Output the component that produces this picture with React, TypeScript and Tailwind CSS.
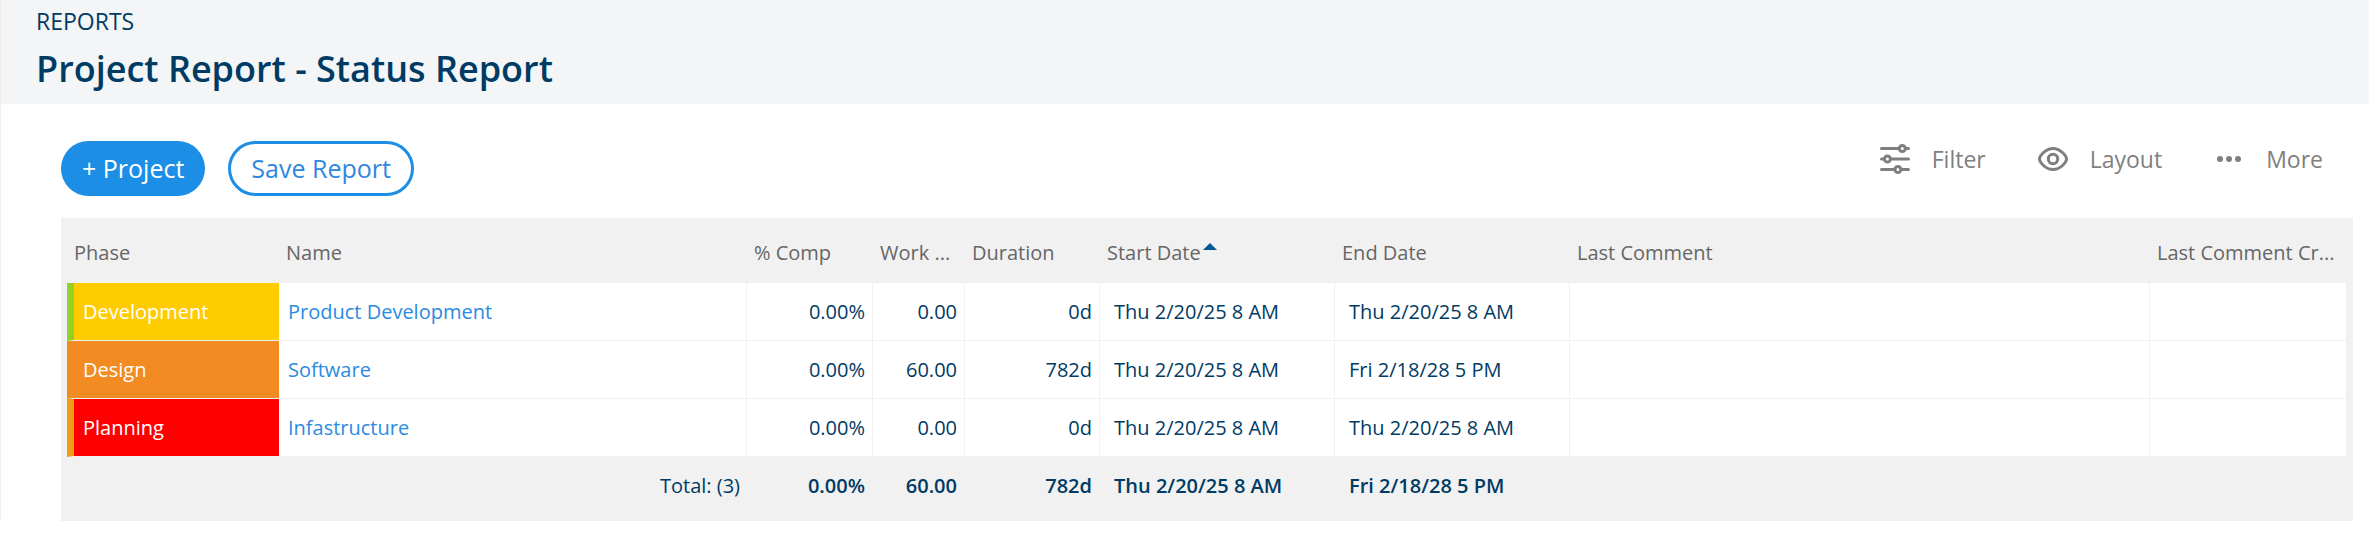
const COLUMNS = [
  { key: "phase", label: "Phase", width: "w-[212px]" },
  { key: "name", label: "Name", width: "w-[468px]" },
  { key: "comp", label: "% Comp", width: "w-[126px]" },
  { key: "work", label: "Work ...", width: "w-[92px]" },
  { key: "duration", label: "Duration", width: "w-[135px]" },
  { key: "start", label: "Start Date", width: "w-[235px]", sorted: true },
  { key: "end", label: "End Date", width: "w-[235px]" },
  { key: "comment", label: "Last Comment", width: "" },
  { key: "created", label: "Last Comment Cr...", width: "w-[196px]" },
];

const PROJECTS = [
  {
    phase: "Development",
    phaseColor: "bg-[#ffcc00] border-l-[#92d225]",
    name: "Product Development",
    comp: "0.00%",
    work: "0.00",
    duration: "0d",
    start: "Thu 2/20/25 8 AM",
    end: "Thu 2/20/25 8 AM",
  },
  {
    phase: "Design",
    phaseColor: "bg-[#f28b22] border-l-[#f28b22]",
    name: "Software",
    comp: "0.00%",
    work: "60.00",
    duration: "782d",
    start: "Thu 2/20/25 8 AM",
    end: "Fri 2/18/28 5 PM",
  },
  {
    phase: "Planning",
    phaseColor: "bg-[#ff0000] border-l-[#f39c12]",
    name: "Infastructure",
    comp: "0.00%",
    work: "0.00",
    duration: "0d",
    start: "Thu 2/20/25 8 AM",
    end: "Thu 2/20/25 8 AM",
  },
];

const CELL = "border-r border-b border-[#f1f1f1]";

function FilterIcon() {
  return (
    <svg width="30" height="30" viewBox="0 0 30 30" fill="none" stroke="currentColor" strokeWidth="3" strokeLinecap="round">
      <path d="M1.5 4.5H19M25.5 4.5H28.5M1.5 15H4M10.5 15H28.5M1.5 25.5H14.5M21 25.5H28.5" />
      <circle cx="22.3" cy="4.5" r="3" />
      <circle cx="7.4" cy="15" r="3" />
      <circle cx="17.9" cy="25.5" r="3" />
    </svg>
  );
}

function EyeIcon() {
  return (
    <svg width="30" height="30" viewBox="0 0 30 30" fill="none" stroke="currentColor" strokeWidth="3">
      <path d="M1.5 15C1.5 12.4 7 4.5 15 4.5S28.5 12.4 28.5 15 23 25.5 15 25.5 1.5 17.6 1.5 15Z" />
      <circle cx="15" cy="15" r="4.7" />
    </svg>
  );
}

function DotsIcon() {
  return (
    <svg width="30" height="30" viewBox="0 0 30 30" fill="currentColor">
      <circle cx="6" cy="15" r="3" />
      <circle cx="15" cy="15" r="3" />
      <circle cx="24" cy="15" r="3" />
    </svg>
  );
}

export default function App() {
  return (
    <main className="border-l border-[#eeeeee] bg-white font-['Open_Sans',sans-serif] text-[#003b63]">
      {/* Page header */}
      <header className="h-[104px] bg-[#f3f5f7] px-[35px] pt-1">
        <p className="text-[23px] leading-[34px]">REPORTS</p>
        <h1 className="text-4xl leading-[62px] font-semibold">Project Report - Status Report</h1>
      </header>

      <div className="pt-[37px] pr-4 pl-[60px]">
        {/* Toolbar */}
        <div className="flex items-start justify-between pb-[22px]">
          <div className="flex gap-[23px]">
            <button type="button" className="h-[55px] rounded-[28px] bg-[#1c8ee6] px-[21px] text-[25px] text-white">
              + Project
            </button>
            <button
              type="button"
              className="h-[55px] rounded-[28px] border-3 border-[#1c8ee6] px-5 text-[25px] text-[#2f87e0]"
            >
              Save Report
            </button>
          </div>
          <div className="flex gap-[52px] pr-[30px] text-[23px] leading-[36px] text-[#7f7f7f]">
            <button type="button" className="flex items-center gap-[22px]">
              <FilterIcon />
              Filter
            </button>
            <button type="button" className="flex items-center gap-[22px]">
              <EyeIcon />
              Layout
            </button>
            <button type="button" className="flex items-center gap-[22px]">
              <DotsIcon />
              More
            </button>
          </div>
        </div>

        {/* Report grid */}
        <div className="bg-[#f1f1f1] pr-[7px] pl-[6px]">
          <table className="w-full table-fixed border-separate border-spacing-0 text-[20px] leading-[28px] whitespace-nowrap">
            <thead>
              <tr className="h-[65px] text-left text-[#666666]">
                {COLUMNS.map((col) => (
                  <th key={col.key} scope="col" className={`pt-1 pl-[7px] font-normal ${col.width}`}>
                    {col.label}
                    {col.sorted && (
                      <svg className="ml-0.5 inline-block align-[10px]" width="14" height="7" viewBox="0 0 14 7">
                        <path d="M0 7L7 0L14 7Z" fill="#005792" />
                      </svg>
                    )}
                  </th>
                ))}
              </tr>
            </thead>
            <tbody>
              {PROJECTS.map((row) => (
                <tr key={row.name} className="h-[58px] bg-white">
                  <td className={`border-b border-l-[7px] border-b-[#f1f1f1] pl-[9px] text-white ${row.phaseColor}`}>
                    {row.phase}
                  </td>
                  <td className={`${CELL} pl-[9px]`}>
                    <a href="#" className="text-[#2a8be2]">
                      {row.name}
                    </a>
                  </td>
                  <td className={`${CELL} pr-[7px] text-right`}>{row.comp}</td>
                  <td className={`${CELL} pr-[7px] text-right`}>{row.work}</td>
                  <td className={`${CELL} pr-[7px] text-right`}>{row.duration}</td>
                  <td className={`${CELL} pl-3.5`}>{row.start}</td>
                  <td className={`${CELL} pl-3.5`}>{row.end}</td>
                  <td className={CELL} />
                  <td className="border-b border-[#f1f1f1]" />
                </tr>
              ))}
            </tbody>
            <tfoot>
              <tr className="h-[64px] font-semibold">
                <td colSpan={2} className="pr-[7px] pb-1.5 text-right font-normal">
                  Total: (3)
                </td>
                <td className="pr-2 pb-1.5 text-right">0.00%</td>
                <td className="pr-2 pb-1.5 text-right">60.00</td>
                <td className="pr-2 pb-1.5 text-right">782d</td>
                <td className="pb-1.5 pl-3.5">Thu 2/20/25 8 AM</td>
                <td className="pb-1.5 pl-3.5">Fri 2/18/28 5 PM</td>
                <td />
                <td />
              </tr>
            </tfoot>
          </table>
        </div>
      </div>
    </main>
  );
}
